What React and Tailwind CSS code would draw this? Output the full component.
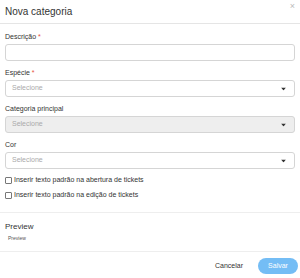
function Caret() {
  return (
    <svg width="5" height="3" viewBox="0 0 5 3" className="absolute right-[8px] top-1/2 -translate-y-1/2">
      <path d="M0 0 L5 0 L2.5 3 Z" fill="#333" />
    </svg>
  );
}

function Field({ label, required, children }) {
  return (
    <div className="mb-[7px]">
      <div className="mb-[3px] h-[9px] text-[7px] leading-[9px] text-[#333]">
        {label}
        {required && <span className="text-[#e74c3c]"> *</span>}
      </div>
      {children}
    </div>
  );
}

function Select({ disabled }) {
  return (
    <div
      className={
        'relative flex h-[17px] items-center rounded-[3px] border border-[#d5d5d5] px-[6px] text-[7px] text-[#aaa] ' +
        (disabled ? 'bg-[#eeeeee]' : 'bg-white')
      }
    >
      Selecione
      <Caret />
    </div>
  );
}

function Check({ children }) {
  return (
    <label className="flex h-[9px] items-center gap-[2px] text-[7px] text-[#333]">
      <span className="h-[7px] w-[7px] rounded-[1px] border border-[#777] bg-white"></span>
      {children}
    </label>
  );
}

export default function App() {
  return (
    <div className="h-[278px] w-[300px] bg-white font-['Liberation_Sans',Arial,sans-serif]">
      <div className="relative flex h-[24px] items-center border-b border-[#e5e5e5] px-[5px]">
        <span className="text-[10px] text-[#333]">Nova categoria</span>
        <span className="absolute right-[5px] top-[2px] text-[9px] leading-none text-[#bbb]">×</span>
      </div>
      <div className="px-[5px] pt-[8px]">
        <Field label="Descrição" required>
          <div className="h-[17px] rounded-[3px] border border-[#d5d5d5] bg-white"></div>
        </Field>
        <Field label="Espécie" required>
          <Select />
        </Field>
        <Field label="Categoria principal">
          <Select disabled />
        </Field>
        <Field label="Cor">
          <Select />
        </Field>
        <div className="mt-[2px] flex flex-col gap-[6px] pb-[12px]">
          <Check>Inserir texto padrão na abertura de tickets</Check>
          <Check>Inserir texto padrão na edição de tickets</Check>
        </div>
      </div>
      <div className="border-t border-[#eee] px-[5px] pt-[9px] pb-[10px]">
        <div className="text-[8px] leading-[10px] text-[#333]">Preview</div>
        <div className="mt-[3px] pl-[3px] text-[5px] leading-[6px] text-[#555]">Preview</div>
      </div>
      <div className="flex items-center justify-end gap-[15px] border-t border-[#eee] px-[2px] pt-[6px]">
        <span className="text-[7px] text-[#333]">Cancelar</span>
        <button className="h-[16px] w-[40px] rounded-[8px] bg-[#74bdf5] text-[7px] text-white">Salvar</button>
      </div>
    </div>
  );
}
